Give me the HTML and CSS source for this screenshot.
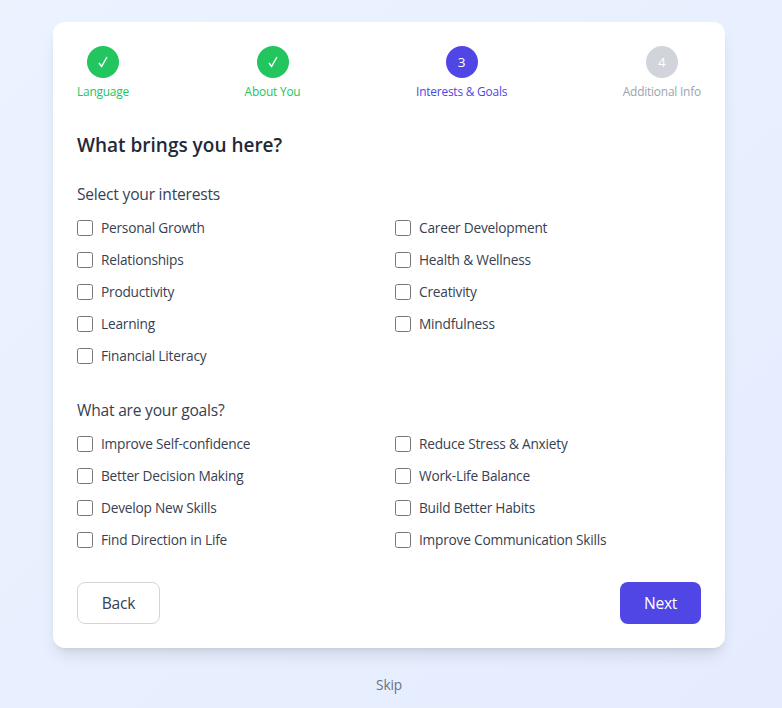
FILE: index.html
```html
<!DOCTYPE html>
<html lang="en">
<head>
<meta charset="utf-8">
<title>Onboarding</title>
<link rel="stylesheet" href="styles.css">
</head>
<body>
<main class="card">
  <ol class="steps">
    <li class="step done"><span class="dot"><svg class="check" viewBox="0 0 14 14"><path d="M3 8 5.6 11.4 11 2"/></svg></span><span class="name">Language</span></li>
    <li class="step done"><span class="dot"><svg class="check" viewBox="0 0 14 14"><path d="M3 8 5.6 11.4 11 2"/></svg></span><span class="name">About You</span></li>
    <li class="step current"><span class="dot">3</span><span class="name">Interests &amp; Goals</span></li>
    <li class="step"><span class="dot">4</span><span class="name">Additional Info</span></li>
  </ol>
  <h1 class="title">What brings you here?</h1>
  <section class="group">
    <h2 class="legend">Select your interests</h2>
    <div class="options">
      <label class="option"><input type="checkbox">Personal Growth</label>
      <label class="option"><input type="checkbox">Career Development</label>
      <label class="option"><input type="checkbox">Relationships</label>
      <label class="option"><input type="checkbox">Health &amp; Wellness</label>
      <label class="option"><input type="checkbox">Productivity</label>
      <label class="option"><input type="checkbox">Creativity</label>
      <label class="option"><input type="checkbox">Learning</label>
      <label class="option"><input type="checkbox">Mindfulness</label>
      <label class="option"><input type="checkbox">Financial Literacy</label>
    </div>
  </section>
  <section class="group goals">
    <h2 class="legend">What are your goals?</h2>
    <div class="options">
      <label class="option"><input type="checkbox">Improve Self-confidence</label>
      <label class="option"><input type="checkbox">Reduce Stress &amp; Anxiety</label>
      <label class="option"><input type="checkbox">Better Decision Making</label>
      <label class="option"><input type="checkbox">Work-Life Balance</label>
      <label class="option"><input type="checkbox">Develop New Skills</label>
      <label class="option"><input type="checkbox">Build Better Habits</label>
      <label class="option"><input type="checkbox">Find Direction in Life</label>
      <label class="option"><input type="checkbox">Improve Communication Skills</label>
    </div>
  </section>
  <div class="actions">
    <button class="btn back">Back</button>
    <button class="btn next">Next</button>
  </div>
</main>
<button class="skip">Skip</button>
</body>
</html>
```
FILE: styles.css
```css
* { box-sizing: border-box; margin: 0; padding: 0; }
body {
  height: 708px;
  overflow: hidden;
  padding: 22px 57px 0 53px;
  font-family: "Open Sans", "Noto Sans", sans-serif;
  color: #374151;
  background: linear-gradient(to bottom right, #ebf3ff, #e5ecfe);
  display: flex;
  flex-direction: column;
  align-items: center;
}
.card {
  width: 672px;
  height: 626px;
  flex: none;
  padding: 24px;
  background: #fff;
  border-radius: 12px;
  box-shadow: 0 10px 15px -3px rgba(0,0,0,.1), 0 4px 6px -4px rgba(0,0,0,.1);
}
.steps { display: flex; justify-content: space-between; list-style: none; }
.step { display: flex; flex-direction: column; align-items: center; color: #9ca3af; }
.dot {
  display: flex; align-items: center; justify-content: center;
  width: 32px; height: 32px; border-radius: 50%;
  background: #d1d5db; color: #fff; font-size: 13.5px;
}
.name { margin-top: 5px; font-size: 11.9px; line-height: 16px; letter-spacing: -.2px; }
.done { color: #22c55e; }
.done .dot { background: #22c55e; }
.current { color: #4f46e5; }
.current .dot { background: #4f46e5; }
.check { width: 14px; height: 14px; fill: none; stroke: #fff; stroke-width: 1.4; }
.title { margin-top: 32px; font-size: 19px; line-height: 28px; font-weight: 600; color: #1f2937; }
.group { margin-top: 23px; }
.goals { margin-top: 32px; }
.legend { font-size: 15.6px; line-height: 24px; font-weight: 400; letter-spacing: -.22px; margin-bottom: 12px; }
.options { display: grid; grid-template-columns: 1fr 1fr; gap: 12px; }
.option { display: flex; align-items: center; gap: 8px; height: 20px; font-size: 13.7px; line-height: 20px; letter-spacing: -.22px; }
.option input { width: 16px; height: 16px; }
.actions { display: flex; justify-content: space-between; margin-top: 32px; }
.btn { height: 42px; border-radius: 8px; font: 15.6px/24px "Open Sans", sans-serif; letter-spacing: -.25px; }
.back { width: 83px; border: 1px solid #d1d5db; background: #fff; color: #374151; }
.next { width: 81px; border: 0; background: #4f46e5; color: #fff; }
.skip { margin-top: 27px; border: 0; background: none; color: #6b7280; font: 13.7px/20px "Open Sans", sans-serif; letter-spacing: -.15px; }
```
